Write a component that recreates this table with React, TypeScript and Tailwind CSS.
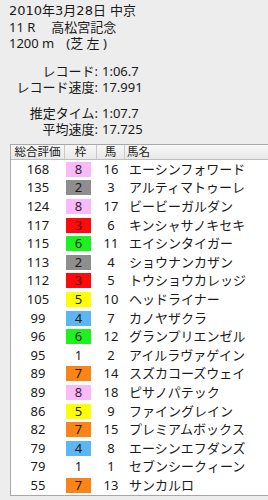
import React from "react";

const rows: [number, number, number, string][] = [
  [168, 8, 16, "エーシンフォワード"],
  [135, 2, 3, "アルティマトゥーレ"],
  [124, 8, 17, "ビービーガルダン"],
  [117, 3, 6, "キンシャサノキセキ"],
  [115, 6, 11, "エイシンタイガー"],
  [113, 2, 4, "ショウナンカザン"],
  [112, 3, 5, "トウショウカレッジ"],
  [105, 5, 10, "ヘッドライナー"],
  [99, 4, 7, "カノヤザクラ"],
  [96, 6, 12, "グランプリエンゼル"],
  [95, 1, 2, "アイルラヴァゲイン"],
  [89, 7, 14, "スズカコーズウェイ"],
  [89, 8, 18, "ピサノパテック"],
  [86, 5, 9, "ファイングレイン"],
  [82, 7, 15, "プレミアムボックス"],
  [79, 4, 8, "エーシンエフダンズ"],
  [79, 1, 1, "セブンシークィーン"],
  [55, 7, 13, "サンカルロ"],
];

const wakuClass: Record<number, string> = {
  1: "bg-white",
  2: "bg-[#8e8e8e]",
  3: "bg-[#ff0a0a] text-[#5a0000]",
  4: "bg-[#5cb6f4]",
  5: "bg-[#ffff00]",
  6: "bg-[#1ff01f] text-[#0c3a0c]",
  7: "bg-[#fb8419]",
  8: "bg-[#f9baf9] text-[#3a1a3a]",
};

function Stat({ label, value }: { label: string; value: string }) {
  return (
    <div className="flex h-[16px] items-center whitespace-nowrap">
      <div className="w-[98px] text-right">{label}:</div>
      <div className="pl-[4px]">{value}</div>
    </div>
  );
}

export default function App() {
  return (
    <div
      className="w-[268px] h-[500px] bg-[#ededed] text-[#1a1a1a] overflow-hidden text-[13px]"
      style={{ fontFamily: '"Noto Sans", "Noto Sans CJK JP", sans-serif' }}
    >
      <div className="pl-[9px] pt-[3px] leading-[16px] whitespace-nowrap">
        <div
          className="h-[16px]"
          style={{ fontFamily: '"DejaVu Sans", "Noto Sans CJK JP", sans-serif' }}
        >
          2010年3月28日 中京
        </div>
        <div className="flex h-[16px]">
          <span>11 R</span>
          <span className="pl-[16px]">高松宮記念</span>
        </div>
        <div className="flex h-[16px]">
          <span>1200 m</span>
          <span className="pl-[12px]">(芝 左 )</span>
        </div>
      </div>
      <div className="mt-[13px]">
        <Stat label="レコード" value="1:06.7" />
        <Stat label="レコード速度" value="17.991" />
      </div>
      <div className="mt-[10px]">
        <Stat label="推定タイム" value="1:07.7" />
        <Stat label="平均速度" value="17.725" />
      </div>
      <div className="ml-[10px] mt-[6px] h-[352px] border border-[#a8a8a8] border-r-0 bg-white">
        <div className="flex h-[15px] items-center border-b border-[#bdbdbd] bg-gradient-to-b from-[#f7f7f7] to-[#e9e9e9] text-[11.5px] leading-none">
          <div className="w-[54px] text-center border-r border-[#c9c9c9] h-full flex items-center justify-center">総合評価</div>
          <div className="w-[32px] text-center border-r border-[#c9c9c9] h-full flex items-center justify-center">枠</div>
          <div className="w-[28px] text-center border-r border-[#c9c9c9] h-full flex items-center justify-center">馬</div>
          <div className="pl-[2px]">馬名</div>
        </div>
        {rows.map(([score, waku, num, name], i) => (
          <div key={i} className="flex h-[18.6px] items-center leading-none">
            <div className="w-[54px] text-center">{score}</div>
            <div className="w-[32px] flex justify-center pr-[6px] pl-[1px]">
              <div
                className={`w-[27px] h-[15px] flex items-center justify-center ${wakuClass[waku]}`}
              >
                {waku}
              </div>
            </div>
            <div className="w-[28px] text-center">{num}</div>
            <div className="pl-[4px] whitespace-nowrap">{name}</div>
          </div>
        ))}
      </div>
    </div>
  );
}
